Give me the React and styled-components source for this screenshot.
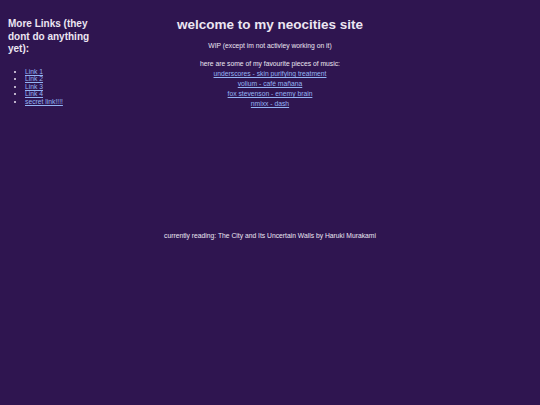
import React from 'react'
import styled, { createGlobalStyle } from 'styled-components'

const GlobalStyle = createGlobalStyle`
  html, body {
    margin: 0;
    padding: 0;
    background: #2f1550;
  }
  body {
    font-family: "Liberation Sans", Arial, sans-serif;
    color: #ece6f2;
  }
`

const Page = styled.div`
  display: grid;
  grid-template-columns: 100px 1fr 100px;
  min-height: 405px;
  padding: 0 8px;
  box-sizing: border-box;
`

const Sidebar = styled.aside`
  padding-top: 18px;
`

const SideTitle = styled.h2`
  margin: 0;
  font-size: 10px;
  line-height: 12.5px;
  font-weight: bold;
`

const LinkList = styled.ul`
  margin: 12px 0 0;
  padding-left: 17px;
  font-size: 6.75px;
  line-height: 7.5px;
`

const Main = styled.main`
  grid-column: 2;
  display: flex;
  flex-direction: column;
  align-items: center;
  text-align: center;
  padding-top: 17px;
`

const Title = styled.h1`
  margin: 0;
  font-size: 13.5px;
  line-height: 16px;
  font-weight: bold;
`

const Text = styled.p`
  margin: ${(p) => p.$top || 0}px 0 0;
  font-size: 6.75px;
  line-height: 10px;
`

const Music = styled.div`
  display: flex;
  flex-direction: column;
  align-items: center;
  font-size: 6.75px;
  line-height: 10px;
`

const A = styled.a`
  color: #94b4f4;
  text-decoration: underline;
`

const Reading = styled(Text)`
  margin-top: auto;
  margin-bottom: 164px;
`

const links = ['Link 1', 'Link 2', 'Link 3', 'Link 4', 'secret link!!!!']
const music = [
  'underscores - skin purifying treatment',
  'volium - café mañana',
  'fox stevenson - enemy brain',
  'nmixx - dash',
]

export default function App() {
  return (
    <>
      <GlobalStyle />
      <Page>
        <Sidebar>
          <SideTitle>More Links (they dont do anything yet):</SideTitle>
          <LinkList>
            {links.map((l) => (
              <li key={l}>
                <A href="#">{l}</A>
              </li>
            ))}
          </LinkList>
        </Sidebar>
        <Main>
          <Title>welcome to my neocities site</Title>
          <Text $top={8}>WIP (except im not activley working on it)</Text>
          <Text $top={8}>here are some of my favourite pieces of music:</Text>
          <Music>
            {music.map((m) => (
              <A href="#" key={m}>{m}</A>
            ))}
          </Music>
          <Reading>currently reading: The City and Its Uncertain Walls by Haruki Murakami</Reading>
        </Main>
      </Page>
    </>
  )
}
